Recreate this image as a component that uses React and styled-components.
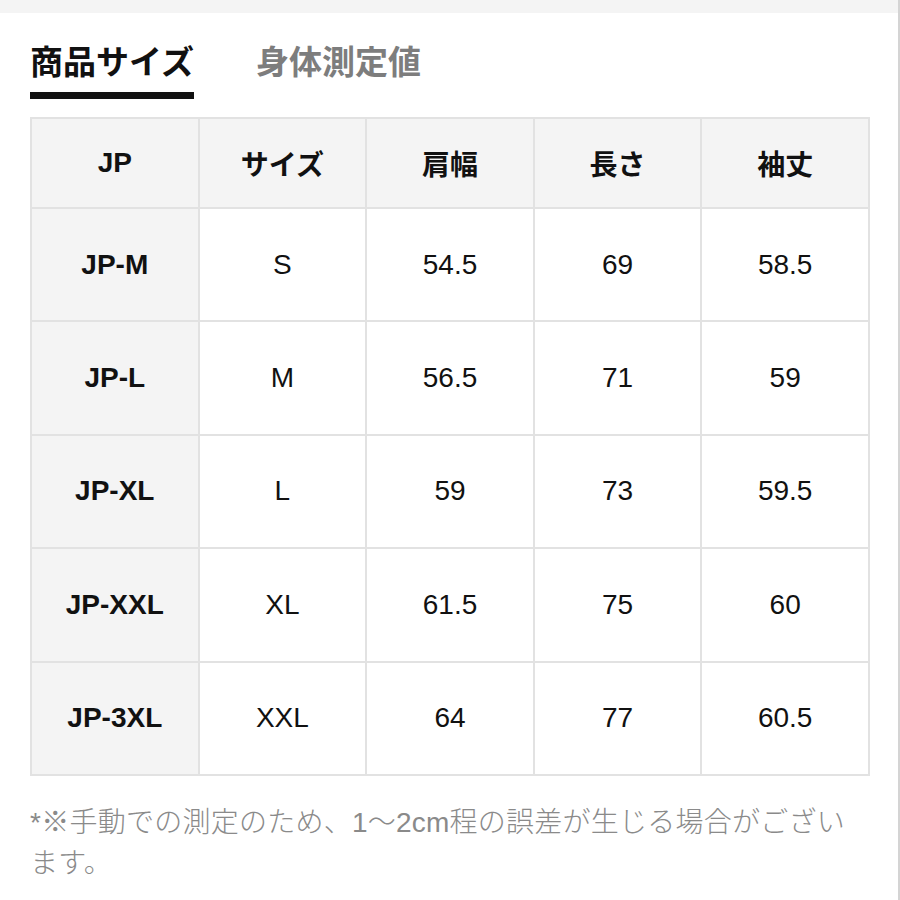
import styled, {createGlobalStyle} from 'styled-components'
import {useState} from 'react'

const GlobalStyle = createGlobalStyle`
  html, body {
    margin: 0;
    padding: 0;
    background: #fff;
  }

  body {
    font-family: "Liberation Sans", "Noto Sans CJK JP", sans-serif;
    color: #111;
  }
`

const Page = styled.div`
  width: 898px;
  min-height: 900px;
  border-right: 2px solid #d4d4d4;
`

const TopBand = styled.div`
  height: 13px;
  background: #f4f4f4;
`

const Content = styled.div`
  padding: 0 30px;
`

const Tabs = styled.div`
  display: flex;
  gap: 62px;
  padding-top: 25px;
`

const Tab = styled.button`
  border: none;
  background: none;
  padding: 0 0 10px;
  margin: 0;
  font-family: "Noto Sans CJK JP", sans-serif;
  font-size: 33px;
  font-weight: 700;
  line-height: 44px;
  color: ${({$active}) => ($active ? '#111' : '#7d7d7d')};
  border-bottom: 7px solid ${({$active}) => ($active ? '#111' : 'transparent')};
  cursor: pointer;
`

const Table = styled.table`
  margin-top: 18px;
  width: 840px;
  border-collapse: collapse;
  table-layout: fixed;

  th, td {
    border: 2px solid #e2e2e2;
    text-align: center;
    vertical-align: middle;
    font-size: 28px;
    padding: 0;
  }
`

const HeadRow = styled.tr`
  height: 90px;
  background: #f4f4f4;

  th {
    font-weight: 700;
  }
`

const BodyRow = styled.tr`
  height: 113.4px;
`

const SizeCell = styled.td`
  background: #f4f4f4;
  font-weight: 700;
`

const ValueCell = styled.td`
  font-weight: 400;
`

const Note = styled.p`
  margin: 26px 0 0;
  width: 825px;
  font-family: "Liberation Sans", "Noto Sans CJK JP", sans-serif;
  font-weight: 300;
  font-size: 28px;
  line-height: 41px;
  letter-spacing: 0.25px;
  color: #8a8a8a;
`

const headers = ['JP', 'サイズ', '肩幅', '長さ', '袖丈']

const rows = [
  ['JP-M', 'S', '54.5', '69', '58.5'],
  ['JP-L', 'M', '56.5', '71', '59'],
  ['JP-XL', 'L', '59', '73', '59.5'],
  ['JP-XXL', 'XL', '61.5', '75', '60'],
  ['JP-3XL', 'XXL', '64', '77', '60.5'],
]

const App = () => {
  const [tab, setTab] = useState(0)

  return (
    <Page>
      <GlobalStyle/>
      <TopBand/>
      <Content>
        <Tabs>
          <Tab $active={tab === 0} onClick={() => setTab(0)}>商品サイズ</Tab>
          <Tab $active={tab === 1} onClick={() => setTab(1)}>身体測定値</Tab>
        </Tabs>
        <Table>
          <thead>
            <HeadRow>
              {headers.map(h => <th key={h}>{h}</th>)}
            </HeadRow>
          </thead>
          <tbody>
            {rows.map(([jp, ...values]) => (
              <BodyRow key={jp}>
                <SizeCell>{jp}</SizeCell>
                {values.map((v, i) => <ValueCell key={i}>{v}</ValueCell>)}
              </BodyRow>
            ))}
          </tbody>
        </Table>
        <Note>*※手動での測定のため、1～2cm程の誤差が生じる場合がございます。</Note>
      </Content>
    </Page>
  )
}

export default App
